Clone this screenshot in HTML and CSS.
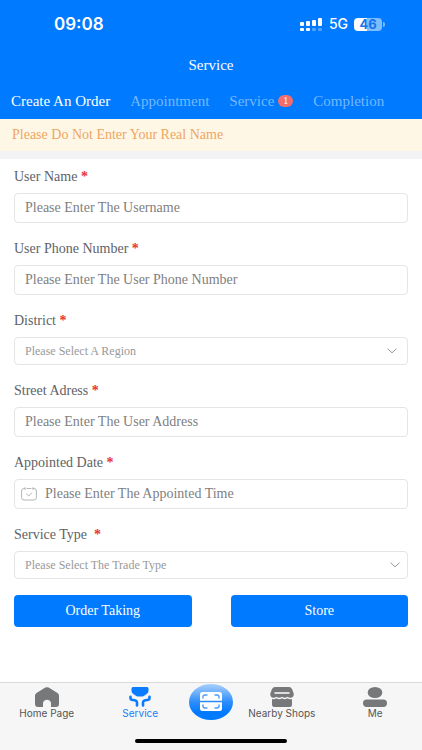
FILE: index.html
```html
<!DOCTYPE html>
<html lang="en">
<head>
<meta charset="utf-8">
<meta name="viewport" content="width=device-width, initial-scale=1">
<title>Service</title>
<link rel="stylesheet" href="styles.css">
</head>
<body>
<header class="header">
  <div class="status">
    <span class="clock">09:08</span>
    <div class="indicators">
      <svg class="signal" width="23" height="13" viewBox="0 0 23 13" fill="#fff" aria-hidden="true">
        <rect x="0" y="4" width="4" height="4" rx="1"/><rect x="6" y="3" width="4" height="5" rx="1"/><rect x="12" y="2" width="4" height="6" rx="1"/><rect x="18" y="0" width="4" height="8" rx="1"/>
        <rect x="0" y="10" width="4" height="3" rx="1"/><rect x="6" y="10" width="4" height="3" rx="1"/><rect x="12" y="10" width="4" height="3" rx="1" opacity=".3"/><rect x="18" y="10" width="4" height="3" rx="1" opacity=".3"/>
      </svg>
      <span class="network">5G</span>
      <span class="battery">46</span>
    </div>
  </div>
  <h1 class="title">Service</h1>
  <nav class="tabs">
    <a class="tab tab-active" href="#create">Create An Order</a>
    <a class="tab" href="#appointment">Appointment</a>
    <a class="tab" href="#service">Service <span class="badge">1</span></a>
    <a class="tab" href="#completion">Completion</a>
  </nav>
</header>
<p class="notice">Please Do Not Enter Your Real Name</p>
<main class="content">
  <form class="form">
    <div class="field">
      <label class="label" for="username">User Name <span class="required">*</span></label>
      <input class="control" id="username" type="text" placeholder="Please Enter The Username">
    </div>
    <div class="field">
      <label class="label" for="phone">User Phone Number <span class="required">*</span></label>
      <input class="control" id="phone" type="tel" placeholder="Please Enter The User Phone Number">
    </div>
    <div class="field">
      <label class="label" for="district">District <span class="required">*</span></label>
      <div class="select-box">
        <select class="control select" id="district"><option>Please Select A Region</option></select>
        <svg class="chevron chevron-inset" width="10" height="6" viewBox="0 0 10 6" aria-hidden="true"><path d="M.5 .7 5 4.800 9.500 .7"/></svg>
      </div>
    </div>
    <div class="field">
      <label class="label" for="address">Street Adress <span class="required">*</span></label>
      <input class="control" id="address" type="text" placeholder="Please Enter The User Address">
    </div>
    <div class="field">
      <label class="label" for="date">Appointed Date <span class="required">*</span></label>
      <div class="control date-box">
        <svg width="16" height="14" viewBox="0 0 16 14" fill="none" stroke="#b4b6ba" stroke-linecap="round" stroke-linejoin="round" aria-hidden="true"><path d="M4 1.500H3Q.6 1.500 .6 4v6.500Q.6 13 3 13h10q2.400 0 2.400-2.500V4q0-2.500-2.400-2.500h-1M6 1.500h4M4 .6v2M12 .6v2M5.500 7l2.300 2L10.700 6"/></svg>
        <input class="date-input" id="date" type="text" placeholder="Please Enter The Appointed Time">
      </div>
    </div>
    <div class="field">
      <label class="label" for="type">Service Type &nbsp;<span class="required">*</span></label>
      <div class="select-box">
        <select class="control select" id="type"><option>Please Select The Trade Type</option></select>
        <svg class="chevron" width="10" height="6" viewBox="0 0 10 6" aria-hidden="true"><path d="M.5 .7 5 4.800 9.500 .7"/></svg>
      </div>
    </div>
    <div class="actions">
      <button class="button" type="button">Order Taking</button>
      <button class="button" type="button">Store</button>
    </div>
  </form>
</main>
<footer class="footer">
  <nav class="bottom-nav">
    <a class="nav-item" href="#home">
      <svg width="24" height="20" viewBox="0 0 24 20" fill="#77787a" aria-hidden="true"><path d="M10.300 .6q1.700-.9 3.400 0L22.500 6q1.500 1 1.500 2.500V17q0 3-3 3h-5v-3.500c0-5-8-5-8 0V20H3q-3 0-3-3V8.500Q0 7 1.500 6Z"/></svg>
      Home Page
    </a>
    <a class="nav-item nav-active" href="#service">
      <svg width="22" height="20" viewBox="0 0 22 20" aria-hidden="true"><path fill="#0a7cff" d="M4 0h14q1.500 0 1.500 1.500V4q0 1.500-1.500 2.700l-2.500 1.800q-1 1-2.500 1H9q-1.500 0-2.500-1L4 6.700Q2.500 5.500 2.500 4V1.500Q2.500 0 4 0Z"/><path fill="none" stroke="#0a7cff" stroke-width="2.600" stroke-linecap="round" stroke-linejoin="round" d="M1.500 9.800v1.400q0 1.300 1.300 1.600l3.700.8q1.500.5 1.500 2v2.900M20.500 9.800v1.400q0 1.300-1.300 1.600l-3.700.8q-1.500.5-1.500 2v2.900"/></svg>
      Service
    </a>
    <a class="nav-scan" href="#scan" aria-label="Scan">
      <svg width="22" height="20" viewBox="0 0 22 20" aria-hidden="true"><rect width="22" height="19" rx="2.500" fill="#fff"/><path fill="none" stroke="#2989fb" stroke-width="1.500" d="M0 9.500h22"/><path fill="none" stroke="#4b9cfb" stroke-width="1.400" stroke-linecap="round" d="M3 6V5q0-2 2-2h2M15 3h2q2 0 2 2v1M3 13v1q0 2 2 2h2M15 16h2q2 0 2-2v-1"/></svg>
    </a>
    <a class="nav-item" href="#shops">
      <svg width="24" height="20" viewBox="0 0 24 20" aria-hidden="true"><path fill="#77787a" d="M5 0h14q2 0 3 2l1.500 4q1 3-1.500 4.500-2.500 1-4.500-.8-2.700 2.200-5.500 0-2.800 2.200-5.500 0-2 1.800-4.500.8Q-.5 9 .5 6L2 2Q3 0 5 0ZM2 12q2.500.6 4.500-.7 2.700 1.700 5.500 0 2.800 1.700 5.500 0 2 1.300 4.500.7v5.500q0 2.500-2.500 2.500h-15Q2 20 2 17.500Z"/><path stroke="#fff" stroke-width="1.500" stroke-linecap="round" d="M5 6h14"/></svg>
      Nearby Shops
    </a>
    <a class="nav-item" href="#me">
      <svg width="24" height="20" viewBox="0 0 24 20" fill="#77787a" aria-hidden="true"><ellipse cx="12" cy="5.500" rx="7.300" ry="5.500"/><rect y="12.500" width="24" height="7.500" rx="3.700"/></svg>
      Me
    </a>
  </nav>
  <div class="home-indicator"></div>
</footer>
</body>
</html>
```
FILE: styles.css
```css
* {
  box-sizing: border-box;
}

body {
  margin: 0;
  min-height: 100vh;
  display: flex;
  flex-direction: column;
  background: #fff;
  font-family: "Liberation Serif", serif;
  font-size: 14px;
  line-height: 20px;
}

a {
  color: inherit;
  text-decoration: none;
}

.header {
  background: #007aff;
  color: #fff;
}

.status {
  display: flex;
  align-items: center;
  justify-content: space-between;
  height: 48px;
  padding: 0 37px 0 54px;
  font-family: Inter, sans-serif;
}

.clock {
  font-size: 17px;
  font-weight: 600;
}

.indicators {
  display: flex;
  align-items: center;
  gap: 6px;
}

.network {
  font-size: 14px;
  font-weight: 500;
}

.battery {
  position: relative;
  width: 28px;
  height: 13px;
  margin-right: 3px;
  border-radius: 4px;
  background: linear-gradient(90deg, #fff 46%, #80bdff 46%);
  color: #1476e8;
  font-size: 13px;
  font-weight: 700;
  line-height: 13px;
  text-align: center;
}

.battery::after {
  content: "";
  position: absolute;
  top: 4px;
  right: -3px;
  width: 2px;
  height: 5px;
  border-radius: 0 2px 2px 0;
  background: #80bdff;
}

.title {
  margin: 0;
  padding: 7px 0;
  font-size: 15px;
  font-weight: 400;
  text-align: center;
}

.tabs {
  display: flex;
  align-items: center;
  gap: 20px;
  height: 37px;
  padding: 0 11px;
  font-size: 15px;
  white-space: nowrap;
}

.tab {
  display: flex;
  align-items: center;
  gap: 4px;
  color: #75b8ff;
}

.tab-active {
  color: #fff;
}

.badge {
  width: 15px;
  height: 12px;
  border-radius: 6px;
  background: #f56c6c;
  color: #fff;
  font-size: 10px;
  line-height: 12px;
  text-align: center;
}

.notice {
  margin: 0;
  padding: 6px 12px;
  border-bottom: 8px solid #f3f3f5;
  background: #fff7e6;
  color: #eca663;
}

.content {
  flex: 1;
  padding: 8px 14px 24px;
}

.form,
.field {
  display: flex;
  flex-direction: column;
}

.form {
  gap: 16px;
}

.field {
  gap: 6px;
}

.label {
  color: #606266;
}

.required {
  color: #e83434;
  font-weight: 700;
}

.control {
  width: 100%;
  height: 30px;
  padding: 0 10px;
  border: 1px solid #e4e5e8;
  border-radius: 4px;
  background: #fff;
  color: #808080;
  font: inherit;
}

.control::placeholder,
.date-input::placeholder {
  color: #808080;
  opacity: 1;
}

.select-box {
  display: grid;
  align-items: center;
}

.select-box > * {
  grid-area: 1 / 1;
}

.select {
  height: 28px;
  appearance: none;
  color: #999;
  font-size: 12px;
}

.chevron {
  justify-self: end;
  margin-right: 8px;
  fill: none;
  stroke: #999;
  pointer-events: none;
}

.chevron-inset {
  margin-right: 11px;
}

.date-box {
  display: flex;
  align-items: center;
  gap: 8px;
  padding: 0 6px;
}

.date-input {
  flex: 1;
  min-width: 0;
  padding: 0;
  border: 0;
  background: none;
  font: inherit;
}

.actions {
  display: flex;
  gap: 39px;
}

.button {
  flex: 1;
  height: 32px;
  padding: 0;
  border: 0;
  border-radius: 4px;
  background: #007aff;
  color: #fff;
  font: inherit;
}

.footer {
  border-top: 1px solid #d9d9da;
  background: #f6f6f7;
}

.bottom-nav {
  display: flex;
  height: 56px;
  padding-top: 4px;
  color: #555;
  font-family: Inter, sans-serif;
  font-size: 10px;
  line-height: 12px;
}

.nav-item {
  flex: 1;
  display: flex;
  flex-direction: column;
  align-items: center;
}

.nav-active {
  color: #1680f8;
}

.nav-scan {
  display: flex;
  align-items: center;
  justify-content: center;
  width: 44px;
  height: 36px;
  margin: -3px 2px 0;
  border-radius: 50%;
  background: linear-gradient(#a9d0fc, #2e8dfb 50%, #007aff 80%);
}

.home-indicator {
  width: 36%;
  height: 4px;
  margin: 0 auto 7px;
  border-radius: 2px;
  background: #000;
}
```
